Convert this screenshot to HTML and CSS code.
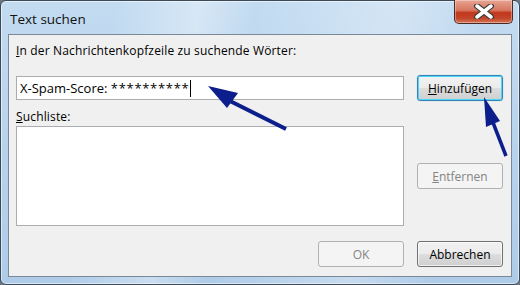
FILE: index.html
```html
<!DOCTYPE html>
<html lang="de">
<head>
    <meta charset="UTF-8">
    <title>Text suchen</title>
    <link rel="stylesheet" href="styles.css">
</head>
<body>
    <div class="window">
        <div class="titlebar">
            <span class="title">Text suchen</span>
            <div class="close-btn">
                <svg width="24" height="15" viewBox="0 0 24 15">
                    <path d="M5 2 L19 13 M19 2 L5 13" stroke="#3b3b3b" stroke-width="6" stroke-linecap="round"/>
                    <path d="M5 2 L19 13 M19 2 L5 13" stroke="#ffffff" stroke-width="3.5" stroke-linecap="round"/>
                </svg>
            </div>
        </div>

        <div class="client">
            <div class="label"><u>I</u>n der Nachrichtenkopfzeile zu suchende Wörter:</div>
            <div class="row">
                <div class="textbox">X-Spam-Score: <span class="stars">**********</span><span class="caret"></span></div>
                <div class="side">
                    <button class="btn focused"><u>H</u>inzufügen</button>
                </div>
            </div>

            <div class="label list-label"><u>S</u>uchliste:</div>
            <div class="row">
                <div class="listbox"></div>
                <div class="side">
                    <button class="btn disabled remove"><u>E</u>ntfernen</button>
                </div>
            </div>

            <div class="footer">
                <button class="btn disabled">OK</button>
                <button class="btn">Abbrechen</button>
            </div>
        </div>

        <!-- Markierungspfeile -->
        <svg class="arrows" width="520" height="285" viewBox="0 0 520 285">
            <line x1="286" y1="129" x2="228" y2="100" stroke="#0c1d8c" stroke-width="4"/>
            <polygon points="208,86 238,93 227,108" fill="#0c1d8c"/>
            <line x1="506" y1="156" x2="492" y2="120" stroke="#0c1d8c" stroke-width="3.5"/>
            <polygon points="484,97 500,121 486,127" fill="#0c1d8c"/>
        </svg>
    </div>
</body>
</html>
```

FILE: styles.css
```css
* {
    box-sizing: border-box;
}

body {
    margin: 0;
    width: 520px;
    height: 285px;
    background: #6b7682;
    font-family: "Segoe UI", "Open Sans", sans-serif;
    font-size: 12px;
    color: #000;
    overflow: hidden;
}

.window {
    position: relative;
    width: 520px;
    height: 285px;
    border: 1px solid #3c4a58;
    border-radius: 6px;
    background:
        linear-gradient(100deg, rgba(255, 255, 255, 0) 20%, rgba(255, 255, 255, 0.35) 35%, rgba(255, 255, 255, 0) 45%, rgba(255, 255, 255, 0.3) 70%, rgba(255, 255, 255, 0) 85%),
        linear-gradient(#c2dbf1, #aecbe8);
    box-shadow: inset 0 0 0 1px rgba(255, 255, 255, 0.55);
    display: flex;
    flex-direction: column;
}

.titlebar {
    height: 33px;
    padding: 9px 0 0 9px;
}

.title {
    font-size: 13.5px;
    line-height: 18px;
    color: #111;
}

.close-btn {
    position: absolute;
    top: -1px;
    right: 6px;
    width: 59px;
    height: 24px;
    border: 1px solid #4b2a26;
    border-top: none;
    border-radius: 0 0 5px 5px;
    background: linear-gradient(#e7a593 0%, #d7765f 45%, #c1371c 55%, #c4462a 80%, #d7775a 100%);
    box-shadow: inset 0 0 0 1px rgba(255, 255, 255, 0.35);
    display: flex;
    align-items: center;
    justify-content: center;
}

.client {
    flex: 1;
    margin: 0 7px 7px 7px;
    border: 1px solid #7a8897;
    background: #f0f0f0;
    padding: 8px 7px 0 7px;
}

.label {
    height: 15px;
    line-height: 15px;
    letter-spacing: 0.15px;
    color: #000;
}

.row {
    display: flex;
    gap: 13px;
    margin-top: 17px;
}

.side {
    width: 86px;
}

.textbox {
    width: 388px;
    height: 24px;
    margin-top: 1px;
    border: 1px solid #abadb3;
    background: #fff;
    padding: 0 3px;
    line-height: 22px;
    font-size: 13px;
    white-space: pre;
    display: flex;
    align-items: center;
}

.stars {
    letter-spacing: 0.7px;
}

.caret {
    display: inline-block;
    width: 1px;
    height: 17px;
    margin-left: 1px;
    background: #000;
}

.list-label {
    margin-top: 8px;
}

.list-label + .row {
    margin-top: 2px;
}

.listbox {
    width: 388px;
    height: 100px;
    border: 1px solid #abadb3;
    background: #fff;
}

.btn {
    display: block;
    width: 86px;
    height: 26px;
    padding: 0;
    border: 1px solid #707070;
    border-radius: 3px;
    background: linear-gradient(#f2f2f2 0%, #ebebeb 48%, #dddddd 52%, #cfcfcf 100%);
    box-shadow: inset 0 0 0 1px rgba(255, 255, 255, 0.7);
    font-family: inherit;
    font-size: 12px;
    color: #000;
}

.focused {
    border-color: #3c7fb1;
    box-shadow: inset 0 0 0 1px #48d8fb, 0 0 1px #48d8fb;
}

.disabled {
    border-color: #adb2b5;
    background: #f4f4f4;
    box-shadow: none;
    color: #838383;
}

.remove {
    margin-top: 37px;
}

.footer {
    display: flex;
    justify-content: flex-end;
    gap: 13px;
    margin-top: 15px;
    padding-right: 1px;
}

.arrows {
    position: absolute;
    top: -1px;
    left: -1px;
}
```
